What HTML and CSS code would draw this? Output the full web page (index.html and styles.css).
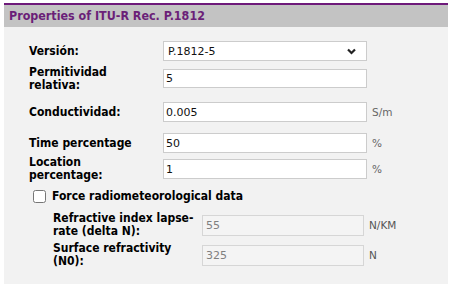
FILE: index.html
```html
<!DOCTYPE html>
<html lang="es">
<head>
<meta charset="utf-8">
<title>Properties of ITU-R Rec. P.1812</title>
<link rel="stylesheet" href="styles.css">
</head>
<body>
<div class="panel">
  <div class="panel-head">Properties of ITU-R Rec. P.1812</div>
  <div class="panel-body">
    <div class="row r1">
      <label class="lbl">Versión:</label>
      <span class="select-wrap">
        <select class="sel"><option>P.1812-5</option></select>
        <svg class="chev" width="9" height="7" viewBox="0 0 9 7"><polyline points="1,1.5 4.5,5 8,1.5" fill="none" stroke="#222" stroke-width="2.2"/></svg>
      </span>
    </div>
    <div class="row r2">
      <label class="lbl">Permitividad<br>relativa:</label>
      <input class="fld" type="text" value="5">
    </div>
    <div class="row r3">
      <label class="lbl">Conductividad:</label>
      <input class="fld" type="text" value="0.005">
      <span class="unit">S/m</span>
    </div>
    <div class="row r4">
      <label class="lbl">Time percentage</label>
      <input class="fld" type="text" value="50">
      <span class="unit">%</span>
    </div>
    <div class="row r5">
      <label class="lbl">Location<br>percentage:</label>
      <input class="fld" type="text" value="1">
      <span class="unit">%</span>
    </div>
    <div class="check-row">
      <input class="chk" type="checkbox" id="force">
      <label class="chk-lbl" for="force">Force radiometeorological data</label>
    </div>
    <div class="row sub s1">
      <label class="lbl sub-lbl">Refractive index lapse-<br>rate (delta N):</label>
      <input class="fld sub-fld" type="text" value="55" disabled>
      <span class="unit sub-unit">N/KM</span>
    </div>
    <div class="row sub s2">
      <label class="lbl sub-lbl">Surface refractivity<br>(N0):</label>
      <input class="fld sub-fld" type="text" value="325" disabled>
      <span class="unit sub-unit">N</span>
    </div>
  </div>
</div>
</body>
</html>
```
FILE: styles.css
```css
html, body {
  margin: 0;
  padding: 0;
  background: #ffffff;
}
body {
  font-family: "DejaVu Sans Condensed", "DejaVu Sans", sans-serif;
  font-size: 12px;
  color: #000;
}
.panel {
  margin: 3px 4px 0 4px;
  width: 444px;
  height: 281px;
  background: #f2f2f2;
  display: flex;
  flex-direction: column;
}
.panel-head {
  border-top: 2px solid #6e1a7a;
  background: #c3c3c3;
  height: 22px;
  line-height: 22px;
  padding-left: 5px;
  color: #6b1f78;
  font-weight: bold;
  font-size: 12.4px;
}
.panel-body {
  padding: 14px 0 0 25px;
}
.row {
  display: flex;
  align-items: center;
}
.lbl {
  width: 134px;
  flex: none;
  font-weight: bold;
  line-height: 13px;
  white-space: nowrap;
}
.r1 { height: 20px; }
.r2 { margin-top: 5px; height: 26px; }
.r3 { margin-top: 10px; height: 20px; }
.r4 { margin-top: 11px; height: 20px; }
.r5 { margin-top: 3px; height: 26px; }
.s1 { margin-top: 9px; height: 26px; }
.s2 { margin-top: 4px; height: 26px; }

.select-wrap {
  position: relative;
  display: block;
  width: 204px;
  height: 20px;
}
.sel {
  appearance: none;
  -webkit-appearance: none;
  width: 204px;
  height: 20px;
  box-sizing: border-box;
  border: 1px solid #cccccc;
  border-radius: 0;
  background: #ffffff;
  font-family: "DejaVu Sans", sans-serif;
  font-size: 11px;
  color: #111;
  padding: 0 0 0 4px;
  margin: 0;
  outline: none;
}
.chev {
  position: absolute;
  right: 11px;
  top: 7px;
}
.fld {
  width: 204px;
  height: 20px;
  box-sizing: border-box;
  border: 1px solid #cccccc;
  border-radius: 0;
  background: #ffffff;
  font-family: "DejaVu Sans", sans-serif;
  font-size: 11px;
  color: #111;
  padding: 0 2px;
  margin: 0;
  outline: none;
}
.r2 .fld { height: 19px; margin-top: -2px; }
.unit {
  margin-left: 5px;
  color: #666;
  font-family: "DejaVu Sans", sans-serif;
  font-size: 10.5px;
}
.check-row {
  margin-top: 8px;
  display: flex;
  align-items: center;
  height: 13px;
  padding-left: 4px;
}
.chk {
  margin: 0;
  width: 13px;
  height: 13px;
}
.chk-lbl {
  margin-left: 6px;
  font-weight: bold;
  line-height: 13px;
}
.sub {
  padding-left: 24px;
}
.sub-lbl {
  width: 149px;
}
.sub-fld {
  width: 162px;
  height: 21px;
  background: #f4f4f4;
  border-color: #d6d6d6;
  color: #808080;
  padding: 0 3px;
}
.sub-unit {
  color: #555;
  font-size: 10.5px;
}
```
